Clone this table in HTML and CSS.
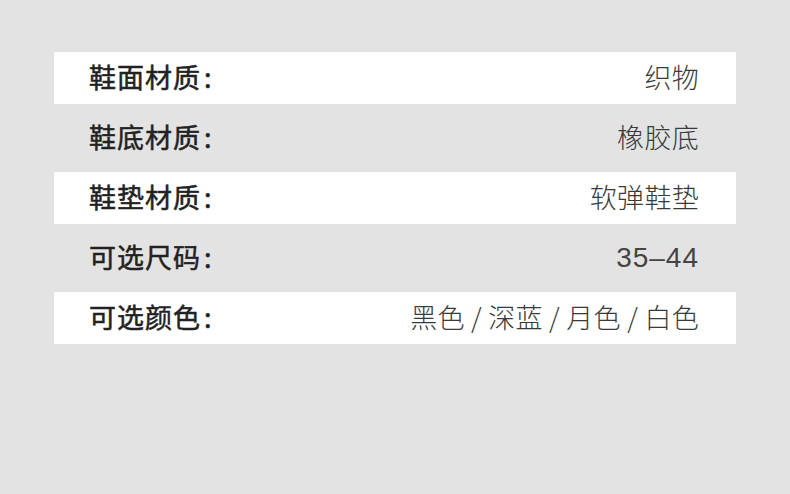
FILE: index.html
```html
<!DOCTYPE html>
<html lang="zh-CN">
<head>
<meta charset="utf-8">
<link rel="stylesheet" href="styles.css">
</head>
<body>
<div class="table">
  <div class="row odd"><span class="label">鞋面材质<span class="colon">:</span></span><span class="value">织物</span></div>
  <div class="row"><span class="label">鞋底材质<span class="colon">:</span></span><span class="value">橡胶底</span></div>
  <div class="row odd"><span class="label">鞋垫材质<span class="colon">:</span></span><span class="value">软弹鞋垫</span></div>
  <div class="row"><span class="label">可选尺码<span class="colon">:</span></span><span class="value num">35–44</span></div>
  <div class="row odd"><span class="label">可选颜色<span class="colon">:</span></span><span class="value">黑色 / 深蓝 / 月色 / 白色</span></div>
</div>
</body>
</html>
```
FILE: styles.css
```css
html, body {
  margin: 0;
  padding: 0;
  background: #e3e3e3;
  width: 790px;
  height: 494px;
  overflow: hidden;
}
.table {
  display: flex;
  flex-direction: column;
  gap: 8px;
  margin: 52px 54px 0 54px;
}
.row {
  box-sizing: border-box;
  height: 52px;
  display: flex;
  align-items: center;
  justify-content: space-between;
  padding: 0 37px 3px 35px;
  font-family: "Noto Sans CJK SC", "Noto Sans", sans-serif;
  font-size: 27px;
}
.row.odd {
  background: #ffffff;
}
.label {
  font-weight: 400;
  color: #222;
  letter-spacing: 1px;
  -webkit-text-stroke: 0.5px #222;
}
.colon {
  margin-left: 3px;
}
.value {
  font-weight: 300;
  color: #3a3a3a;
  letter-spacing: 0.3px;
}
.value.num {
  font-family: "Liberation Sans", sans-serif;
  font-size: 28px;
  letter-spacing: 1px;
  color: #444;
  margin-top: 3px;
}
```
